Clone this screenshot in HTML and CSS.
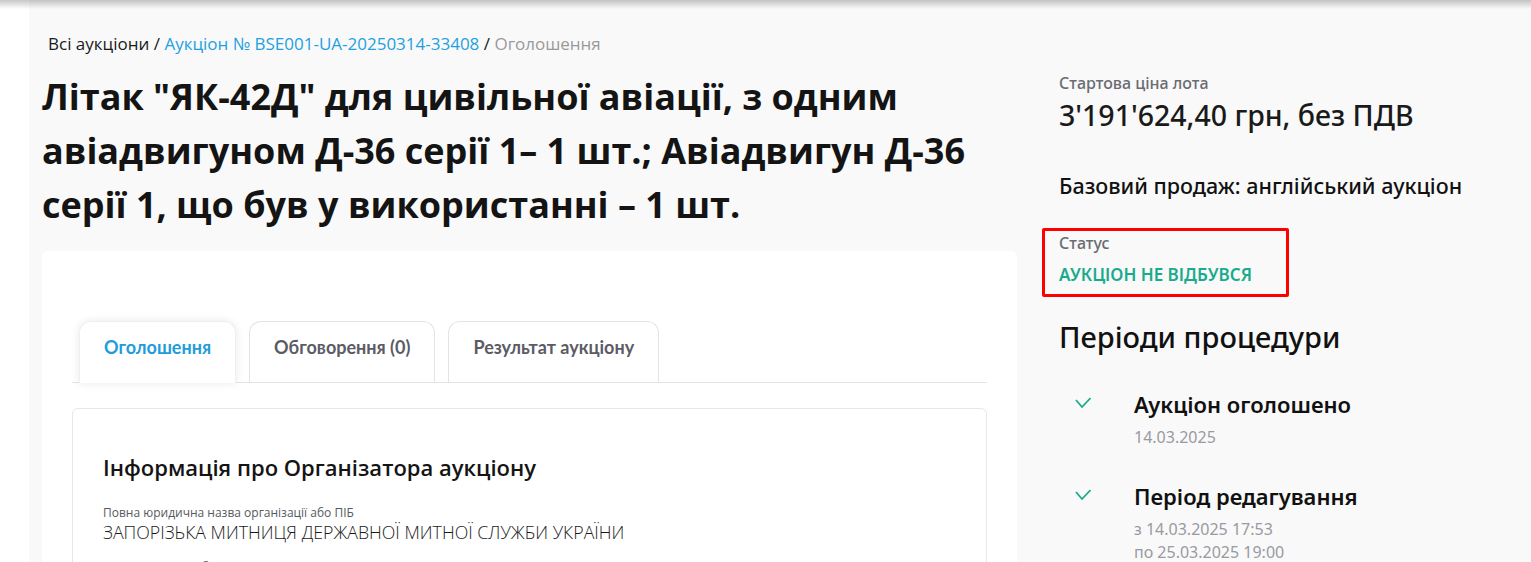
FILE: index.html
```html
<!DOCTYPE html>
<html lang="uk">
<head>
<meta charset="utf-8">
<title>Оголошення</title>
<link rel="stylesheet" href="styles.css">
</head>
<body>
<div class="header-shadow"></div>
<main class="main">
  <nav class="breadcrumb">
    <span class="crumb-root">Всі аукціони</span> / <span class="crumb-link">Аукціон № BSE001-UA-20250314-33408</span> / <span class="crumb-current">Оголошення</span>
  </nav>
  <div class="columns">
    <section class="left">
      <h1 class="title">Літак "ЯК-42Д" для цивільної авіації, з одним авіадвигуном Д-36 серії 1– 1 шт.; Авіадвигун Д-36 серії 1, що був у використанні – 1 шт.</h1>
      <div class="card">
        <div class="tabs">
          <div class="tab tab-active">Оголошення</div>
          <div class="tab">Обговорення (0)</div>
          <div class="tab">Результат аукціону</div>
        </div>
        <div class="info-box">
          <h2 class="info-title">Інформація про Організатора аукціону</h2>
          <div class="field-label">Повна юридична назва організації або ПІБ</div>
          <div class="field-value">ЗАПОРІЗЬКА МИТНИЦЯ ДЕРЖАВНОЇ МИТНОЇ СЛУЖБИ УКРАЇНИ</div>
          <div class="field-label next-label">Код за ЄДРПОУ або ІПН</div>
        </div>
      </div>
    </section>
    <aside class="sidebar">
      <div class="side-label">Стартова ціна лота</div>
      <div class="price">3'191'624,40 грн, без ПДВ</div>
      <div class="sale-type">Базовий продаж: англійський аукціон</div>
      <div class="status-box">
        <div class="status-label">Статус</div>
        <div class="status-value">АУКЦІОН НЕ ВІДБУВСЯ</div>
      </div>
      <h2 class="periods-title">Періоди процедури</h2>
      <div class="period">
        <svg class="check" width="16" height="12" viewBox="0 0 16 12"><polyline points="1,3 7,10 15.5,1" fill="none" stroke="#1aab8d" stroke-width="1.8"/></svg>
        <div class="period-body">
          <div class="period-name">Аукціон оголошено</div>
          <div class="period-date">14.03.2025</div>
        </div>
      </div>
      <div class="period">
        <svg class="check" width="16" height="12" viewBox="0 0 16 12"><polyline points="1,3 7,10 15.5,1" fill="none" stroke="#1aab8d" stroke-width="1.8"/></svg>
        <div class="period-body">
          <div class="period-name">Період редагування</div>
          <div class="period-date">з 14.03.2025 17:53<br>по 25.03.2025 19:00</div>
        </div>
      </div>
    </aside>
  </div>
</main>
</body>
</html>
```
FILE: styles.css
```css
html, body {
  margin: 0;
  padding: 0;
  background: #ffffff;
  overflow: hidden;
}
body {
  font-family: "Noto Sans", "Open Sans", sans-serif;
  color: #1a1a1a;
  position: relative;
}
.header-shadow {
  position: absolute;
  top: 0;
  left: 0;
  right: 0;
  height: 9px;
  background: linear-gradient(to bottom, rgba(0,0,0,0.22), rgba(0,0,0,0));
  z-index: 2;
}
.main {
  margin-left: 29px;
  background: #f9f9f9;
  padding: 0 0 60px 13px;
  min-height: 600px;
}
.breadcrumb {
  padding: 34px 0 0 6px;
  font-family: "Open Sans", sans-serif;
  font-size: 17px;
  line-height: 20px;
  color: #1a1a1a;
}
.crumb-link { color: #1ea1e0; }
.crumb-current { color: #9a9a9a; }
.columns {
  display: flex;
  gap: 25px;
  margin-top: 16px;
}
.left {
  width: 975px;
  flex: none;
}
.title {
  margin: 0;
  font-family: "Open Sans", sans-serif;
  font-weight: 700;
  font-size: 36px;
  line-height: 54px;
  color: #141414;
}
.card {
  margin-top: 19px;
  background: #ffffff;
  border-radius: 6px 6px 0 0;
  padding: 70px 30px 0 30px;
}
.tabs {
  display: flex;
  gap: 13px;
  padding-left: 7px;
  border-bottom: 1px solid #e3e3ea;
}
.tab {
  height: 61px;
  box-sizing: border-box;
  padding: 14px 24px 0;
  border: 1px solid #e3e3ea;
  border-bottom: none;
  border-radius: 12px 12px 0 0;
  font-family: Lato, sans-serif;
  font-weight: 700;
  font-size: 18px;
  line-height: 22px;
  color: #5b5b66;
  background: #ffffff;
}
.tab-active {
  color: #229cd9;
  margin-bottom: -1px;
  height: 62px;
  box-shadow: 0 0 10px rgba(0,0,0,0.09);
  border-color: #efeff3;
}
.info-box {
  margin-top: 25px;
  border: 1px solid #e6e6ec;
  border-radius: 6px;
  padding: 44px 30px 40px;
}
.info-title {
  margin: 0 0 24px;
  font-family: "Open Sans", sans-serif;
  font-weight: 600;
  font-size: 22px;
  line-height: 28px;
  color: #141414;
}
.field-label {
  font-family: "Open Sans", sans-serif;
  font-size: 12px;
  line-height: 16px;
  color: #555a60;
}
.field-value {
  font-family: "Open Sans", sans-serif;
  font-weight: 300;
  font-size: 17.75px;
  line-height: 22px;
  color: #1a1a1a;
}
.next-label { margin-top: 16px; }
.sidebar {
  flex: 1;
  padding-top: 3px;
}
.side-label, .price, .sale-type, .periods-title, .period {
  margin-left: 17px;
}
.side-label {
  font-size: 16px;
  line-height: 20px;
  font-weight: 500;
  color: #6b6b72;
}
.price {
  margin-top: 4px;
  font-size: 28.5px;
  line-height: 36px;
  font-weight: 500;
  color: #1a1a1a;
}
.sale-type {
  margin-top: 39px;
  font-size: 21.5px;
  line-height: 28px;
  font-weight: 500;
  color: #111;
}
.status-box {
  margin-top: 28px;
  width: 227px;
  border: 3px solid #ff0000;
  border-radius: 2px;
  padding: 2px 0 8px 14px;
}
.status-label {
  font-size: 16px;
  line-height: 20px;
  font-weight: 500;
  color: #6b6b72;
}
.status-value {
  margin-top: 11px;
  font-size: 17px;
  line-height: 22px;
  font-weight: 600;
  color: #1aab8d;
}
.periods-title {
  margin-top: 22px;
  margin-bottom: 0;
  font-size: 29px;
  line-height: 36px;
  font-weight: 500;
  color: #111;
}
.period {
  display: flex;
  align-items: flex-start;
  padding-left: 16px;
  margin-top: 35px;
}
.period + .period { margin-top: 33px; }
.check {
  flex: none;
  margin-top: 7px;
  margin-right: 43px;
}
.period-name {
  font-size: 22px;
  line-height: 28px;
  font-weight: 600;
  color: #111;
}
.period-date {
  margin-top: 8px;
  font-size: 16px;
  line-height: 23px;
  color: #9a9aa2;
}
```
